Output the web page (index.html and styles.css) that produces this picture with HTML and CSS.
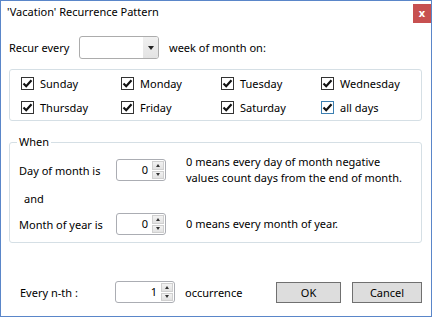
FILE: index.html
```html
<!DOCTYPE html>
<html lang="en">
<head>
  <meta charset="UTF-8" />
  <title>'Vacation' Recurrence Pattern</title>
  <link rel="stylesheet" href="styles.css">
</head>
<body>
  <div class="window">
    <div class="titlebar">
      <span class="title">'Vacation' Recurrence Pattern</span>
      <span class="close">x</span>
    </div>

    <div class="content">
      <div class="recur">
        <span class="recur-label">Recur every</span>
        <div class="combo">
          <span class="combo-text"></span>
          <span class="combo-btn"><i class="tri-down"></i></span>
        </div>
        <span class="recur-after">week of month on:</span>
      </div>

      <div class="days">
        <label class="check"><span class="box"><svg width="11" height="11" viewBox="0 0 11 11"><path d="M1.5 5.5 L4.2 8.2 L9.5 2.2" /></svg></span>Sunday</label>
        <label class="check"><span class="box"><svg width="11" height="11" viewBox="0 0 11 11"><path d="M1.5 5.5 L4.2 8.2 L9.5 2.2" /></svg></span>Monday</label>
        <label class="check"><span class="box"><svg width="11" height="11" viewBox="0 0 11 11"><path d="M1.5 5.5 L4.2 8.2 L9.5 2.2" /></svg></span>Tuesday</label>
        <label class="check"><span class="box"><svg width="11" height="11" viewBox="0 0 11 11"><path d="M1.5 5.5 L4.2 8.2 L9.5 2.2" /></svg></span>Wednesday</label>
        <label class="check"><span class="box"><svg width="11" height="11" viewBox="0 0 11 11"><path d="M1.5 5.5 L4.2 8.2 L9.5 2.2" /></svg></span>Thursday</label>
        <label class="check"><span class="box"><svg width="11" height="11" viewBox="0 0 11 11"><path d="M1.5 5.5 L4.2 8.2 L9.5 2.2" /></svg></span>Friday</label>
        <label class="check"><span class="box"><svg width="11" height="11" viewBox="0 0 11 11"><path d="M1.5 5.5 L4.2 8.2 L9.5 2.2" /></svg></span>Saturday</label>
        <label class="check"><span class="box focus"><svg width="11" height="11" viewBox="0 0 11 11"><path d="M1.5 5.5 L4.2 8.2 L9.5 2.2" /></svg></span>all days</label>
      </div>

      <fieldset class="when">
        <legend>When</legend>

        <div class="when-row first">
          <span class="when-label">Day of month is</span>
          <div class="spin">
            <span class="spin-val">0</span>
            <span class="spin-btns"><span class="spin-btn"><i class="tri-up"></i></span><span class="spin-btn"><i class="tri-dn"></i></span></span>
          </div>
          <span class="when-note">0 means every day of month negative<br>values count days from the end of month.</span>
        </div>

        <div class="and">and</div>

        <div class="when-row">
          <span class="when-label">Month of year is</span>
          <div class="spin">
            <span class="spin-val">0</span>
            <span class="spin-btns"><span class="spin-btn"><i class="tri-up"></i></span><span class="spin-btn"><i class="tri-dn"></i></span></span>
          </div>
          <span class="when-note">0 means every month of year.</span>
        </div>
      </fieldset>

      <div class="footer">
        <span class="footer-label">Every n-th :</span>
        <div class="spin wide">
          <span class="spin-val">1</span>
          <span class="spin-btns"><span class="spin-btn"><i class="tri-up"></i></span><span class="spin-btn"><i class="tri-dn"></i></span></span>
        </div>
        <span class="footer-after">occurrence</span>
        <div class="buttons">
          <button class="btn ok">OK</button>
          <button class="btn cancel">Cancel</button>
        </div>
      </div>
    </div>
  </div>
</body>
</html>
```

FILE: styles.css
```css
body {
  margin: 0;
  font-family: "Segoe UI", "Noto Sans", sans-serif;
  font-size: 11px;
  color: #000;
  background: #fff;
}

.window {
  width: 432px;
  height: 317px;
  box-sizing: border-box;
  border: 1px solid #5a86c9;
  display: flex;
  flex-direction: column;
  white-space: nowrap;
}

.titlebar {
  height: 27px;
  display: flex;
  justify-content: space-between;
  align-items: flex-start;
}

.title {
  padding: 3px 0 0 6px;
  line-height: 16px;
}

.close {
  width: 18px;
  height: 19px;
  margin-top: 3px;
  background: #c75050;
  color: #fff;
  font-weight: bold;
  font-size: 11px;
  line-height: 17px;
  text-align: center;
}

.content {
  padding: 0 9px 0 8px;
}

/* recur row */
.recur {
  display: flex;
  align-items: center;
  height: 23px;
  margin-top: 8px;
}

.recur-label {
  width: 70px;
}

.combo {
  width: 80px;
  height: 23px;
  box-sizing: border-box;
  border: 1px solid #acacac;
  border-radius: 3px;
  display: flex;
  background: #fff;
  overflow: hidden;
}

.combo-text {
  flex: 1;
}

.combo-btn {
  width: 15px;
  background: linear-gradient(#f0f0f0, #e3e3e3);
  display: flex;
  align-items: center;
  justify-content: center;
}

.tri-down {
  width: 0;
  height: 0;
  border-left: 3.5px solid transparent;
  border-right: 3.5px solid transparent;
  border-top: 4px solid #222;
}

.recur-after {
  margin-left: 10px;
}

/* day checkboxes */
.days {
  margin-top: 10px;
  height: 52px;
  box-sizing: border-box;
  border: 1px solid #d5dfe5;
  border-radius: 3px;
  padding: 1px 0 0 11px;
  display: grid;
  grid-template-columns: repeat(4, 100px);
  grid-auto-rows: 24px;
}

.check {
  display: flex;
  align-items: center;
  gap: 6px;
}

.box {
  width: 13px;
  height: 13px;
  box-sizing: border-box;
  border: 1px solid #333;
  background: #fff;
  display: flex;
  align-items: center;
  justify-content: center;
}

.box.focus {
  border-color: #3c7fb1;
}

.box svg path {
  fill: none;
  stroke: #111;
  stroke-width: 2.2;
}

/* when group */
.when {
  margin: 13px 0 0 0;
  padding: 0 9px 7px 9px;
  border: 1px solid #d5dfe5;
  border-radius: 3px;
}

.when legend {
  padding: 0 2px;
  margin-left: -2px;
  line-height: 16px;
}

.when-row {
  display: flex;
  align-items: center;
  height: 22px;
  margin-top: 6px;
}

.when-row.first {
  height: 32px;
  margin-top: 4px;
}

.when-label {
  width: 97px;
}

.when-note {
  margin-left: 20px;
  line-height: 16px;
}

.and {
  margin-top: 5px;
  padding-left: 5px;
  line-height: 16px;
}

/* spinner */
.spin {
  width: 50px;
  height: 22px;
  box-sizing: border-box;
  border: 1px solid #abadb3;
  border-radius: 3px;
  display: flex;
  background: #fff;
}

.spin.wide {
  width: 60px;
}

.spin-val {
  flex: 1;
  text-align: right;
  padding-right: 4px;
  line-height: 20px;
}

.spin-btns {
  width: 12px;
  display: flex;
  flex-direction: column;
  padding: 1px 1px 1px 0;
  gap: 1px;
}

.spin-btn {
  flex: 1;
  background: linear-gradient(#f2f2f2, #e2e2e2);
  border: 1px solid #d0d0d0;
  display: flex;
  align-items: center;
  justify-content: center;
}

.tri-up,
.tri-dn {
  width: 0;
  height: 0;
  border-left: 2.5px solid transparent;
  border-right: 2.5px solid transparent;
}

.tri-up {
  border-bottom: 3px solid #333;
}

.tri-dn {
  border-top: 3px solid #333;
}

/* footer row */
.footer {
  display: flex;
  align-items: center;
  height: 22px;
  margin-top: 38px;
}

.footer-label {
  width: 95px;
  margin-left: 11px;
}

.footer-after {
  margin-left: 10px;
}

.buttons {
  margin-left: auto;
  display: flex;
  gap: 11px;
}

.btn {
  height: 21px;
  padding: 0;
  font-family: inherit;
  font-size: 11px;
  color: #000;
  background: #dddddd;
  border: 1px solid #707070;
}

.ok {
  width: 65px;
}

.cancel {
  width: 70px;
}
```
